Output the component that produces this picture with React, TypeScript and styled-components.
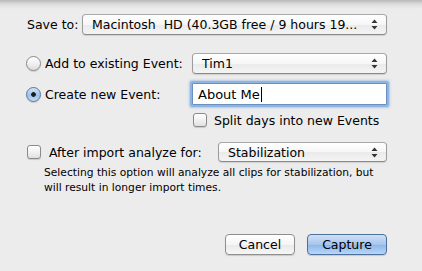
import styled, { createGlobalStyle } from 'styled-components';

const GlobalStyle = createGlobalStyle`
    html, body {
        margin: 0;
        padding: 0;
        background: #ececec;
    }
    body {
        font-family: 'DejaVu Sans', 'Liberation Sans', sans-serif;
        font-size: 12.5px;
        color: #000;
    }
`;

const Sheet = styled.div`
    width: 422px;
    height: 271px;
    box-sizing: border-box;
    background: linear-gradient(#b8b8b8 0px, #dcdcdc 4px, #ececec 9px, #ececec 100%);
    padding: 14px 35px 0 0;
    display: flex;
    flex-direction: column;
`;

const Row = styled.div<{ $top: number; $left: number; $h: number }>`
    display: flex;
    align-items: center;
    margin-top: ${(p) => p.$top}px;
    padding-left: ${(p) => p.$left}px;
    height: ${(p) => p.$h}px;
`;

const Label = styled.span<{ $w?: number; $gap?: number }>`
    white-space: nowrap;
    ${(p) => (p.$w ? `width: ${p.$w}px;` : '')}
    margin-left: ${(p) => p.$gap ?? 0}px;
    flex-shrink: 0;
`;

const Popup = styled.div<{ $h: number }>`
    flex: 1;
    height: ${(p) => p.$h}px;
    box-sizing: border-box;
    border: 1px solid #9c9c9c;
    border-top-color: #a8a8a8;
    border-bottom-color: #8a8a8a;
    border-radius: 4px;
    background: linear-gradient(#ffffff 0%, #f6f6f6 50%, #eaeaea 51%, #f4f4f4 100%);
    box-shadow: 0 1px 1px rgba(0, 0, 0, 0.12);
    display: flex;
    align-items: center;
    padding: 0 8px 0 9px;
    white-space: nowrap;
    overflow: hidden;
`;

const PopupText = styled.span`
    flex: 1;
    overflow: hidden;
`;

const Arrows = styled.svg`
    width: 7px;
    height: 11px;
    flex-shrink: 0;
`;

const Radio = styled.span<{ $on?: boolean }>`
    width: 15px;
    height: 15px;
    box-sizing: border-box;
    border-radius: 50%;
    border: 1px solid ${(p) => (p.$on ? '#56759e' : '#8b8b8b')};
    background: ${(p) =>
        p.$on
            ? 'radial-gradient(circle at 50% 50%, #1c1c1c 0px, #1c1c1c 2px, transparent 2.6px), linear-gradient(#d4e4f7, #9cc1ea 55%, #c2daf4)'
            : 'linear-gradient(#ffffff, #f0f0f0 50%, #dcdcdc 100%)'};
    box-shadow: 0 1px 1px rgba(0, 0, 0, 0.15);
    margin-right: 4px;
    flex-shrink: 0;
`;

const Check = styled.span`
    width: 14px;
    height: 14px;
    box-sizing: border-box;
    border: 1px solid #8b8b8b;
    border-radius: 3px;
    background: linear-gradient(#ffffff, #f2f2f2 50%, #e0e0e0 100%);
    box-shadow: 0 1px 1px rgba(0, 0, 0, 0.15);
    flex-shrink: 0;
`;

const Field = styled.div`
    flex: 1;
    height: 22px;
    box-sizing: border-box;
    border: 1px solid #6b8fc0;
    background: #fff;
    box-shadow: 0 0 0 2px #8eb5e2, 0 0 2px 3px rgba(120, 165, 220, 0.5);
    border-radius: 1px;
    display: flex;
    align-items: center;
    padding-left: 5px;
    font-size: 13px;
`;

const Caret = styled.span`
    display: inline-block;
    width: 1px;
    height: 15px;
    background: #000;
    margin-left: 1px;
`;

const Note = styled.div`
    margin-top: 3px;
    padding-left: 44px;
    font-size: 10.7px;
    line-height: 15px;
`;

const Buttons = styled.div`
    display: flex;
    justify-content: flex-end;
    gap: 12px;
    margin-top: auto;
    margin-bottom: 16px;
`;

const Button = styled.button<{ $primary?: boolean; $w: number }>`
    width: ${(p) => p.$w}px;
    height: 21px;
    box-sizing: border-box;
    font-family: inherit;
    font-size: 12.5px;
    padding: 0;
    border-radius: 4px;
    border: 1px solid ${(p) => (p.$primary ? '#4f6f9c' : '#8f8f8f')};
    background: ${(p) =>
        p.$primary
            ? 'linear-gradient(#cfe0f5, #a6c6ee 50%, #8cb6ea 51%, #b8d7f8 100%)'
            : 'linear-gradient(#ffffff, #f5f5f5 50%, #e9e9e9 51%, #f6f6f6 100%)'};
    box-shadow: 0 1px 1px rgba(0, 0, 0, 0.15);
    color: #000;
`;

const UpDown = () => (
    <Arrows viewBox="0 0 7 11">
        <path d="M3.5 0.5 L6.5 4 L0.5 4 Z" fill="#333" />
        <path d="M3.5 10.5 L6.5 7 L0.5 7 Z" fill="#333" />
    </Arrows>
);

const App = () => (
    <>
        <GlobalStyle />
        <Sheet>
            <Row $top={0} $left={27} $h={21}>
                <Label $w={55}>Save to:</Label>
                <Popup $h={21}>
                    <PopupText>Macintosh&nbsp; HD (40.3GB free / 9 hours 19...</PopupText>
                    <UpDown />
                </Popup>
            </Row>
            <Row $top={18} $left={26} $h={21}>
                <Radio />
                <Label $w={147}>Add to existing Event:</Label>
                <Popup $h={21}>
                    <PopupText>Tim1</PopupText>
                    <UpDown />
                </Popup>
            </Row>
            <Row $top={9} $left={26} $h={22}>
                <Radio $on />
                <Label $w={147}>Create new Event:</Label>
                <Field>
                    About Me
                    <Caret />
                </Field>
            </Row>
            <Row $top={8} $left={193} $h={14}>
                <Check />
                <Label $gap={7}>Split days into new Events</Label>
            </Row>
            <Row $top={15} $left={27} $h={20}>
                <Check />
                <Label $w={169} $gap={8}>
                    After import analyze for:
                </Label>
                <Popup $h={20}>
                    <PopupText>Stabilization</PopupText>
                    <UpDown />
                </Popup>
            </Row>
            <Note>
                Selecting this option will analyze all clips for stabilization, but
                <br />
                will result in longer import times.
            </Note>
            <Buttons>
                <Button $w={70}>Cancel</Button>
                <Button $primary $w={80}>
                    Capture
                </Button>
            </Buttons>
        </Sheet>
    </>
);

export default App;
